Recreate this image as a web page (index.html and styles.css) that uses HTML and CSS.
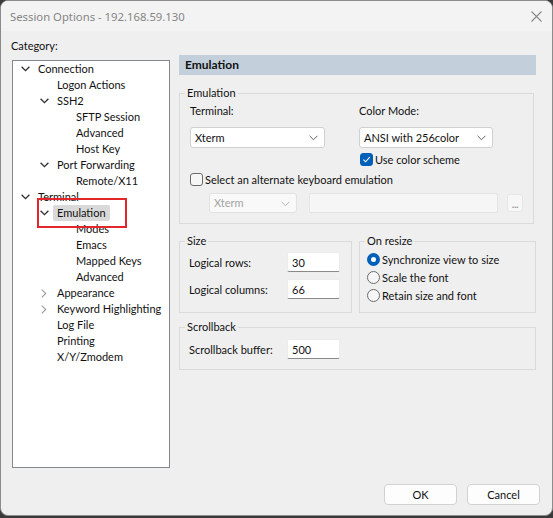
FILE: index.html
```html
<!DOCTYPE html>
<html lang="en">
  <head>
    <meta charset="UTF-8" />
    <title>Session Options</title>
    <link rel="stylesheet" href="styles.css">
  </head>

  <body>
    <div class="window">
      <div class="titleBar">
        <div class="titleText">Session Options - 192.168.59.130</div>
        <div class="titleClose">
          <svg width="11" height="11" viewBox="0 0 11 11"><path d="M0.5 0.5L10.5 10.5M10.5 0.5L0.5 10.5" stroke="#8a8a8a" stroke-width="1.1" fill="none"/></svg>
        </div>
      </div>

      <div class="mainArea">
        <div class="leftCol">
          <div class="catLabel">Category:</div>
          <ul class="tree">
            <li class="lv0"><span class="tog open"></span>Connection</li>
            <li class="lv1"><span class="tog"></span>Logon Actions</li>
            <li class="lv1"><span class="tog open"></span>SSH2</li>
            <li class="lv2"><span class="tog"></span>SFTP Session</li>
            <li class="lv2"><span class="tog"></span>Advanced</li>
            <li class="lv2"><span class="tog"></span>Host Key</li>
            <li class="lv1"><span class="tog open"></span>Port Forwarding</li>
            <li class="lv2"><span class="tog"></span>Remote/X11</li>
            <li class="lv0"><span class="tog open"></span>Terminal</li>
            <li class="lv1 current"><span class="tog open"></span><span class="selName">Emulation</span><div class="markBox"></div></li>
            <li class="lv2"><span class="tog"></span>Modes</li>
            <li class="lv2"><span class="tog"></span>Emacs</li>
            <li class="lv2"><span class="tog"></span>Mapped Keys</li>
            <li class="lv2"><span class="tog"></span>Advanced</li>
            <li class="lv1"><span class="tog shut"></span>Appearance</li>
            <li class="lv1"><span class="tog shut"></span>Keyword Highlighting</li>
            <li class="lv1"><span class="tog"></span>Log File</li>
            <li class="lv1"><span class="tog"></span>Printing</li>
            <li class="lv1"><span class="tog"></span>X/Y/Zmodem</li>
          </ul>
        </div>

        <div class="rightCol">
          <div class="panelHead">Emulation</div>

          <fieldset class="group emuGroup">
            <legend>Emulation</legend>
            <div class="emuTop">
              <div class="emuCol termCol">
                <div class="fieldLabel">Terminal:</div>
                <div class="combo termCombo">Xterm<span class="comboArrow"></span></div>
              </div>
              <div class="emuCol">
                <div class="fieldLabel">Color Mode:</div>
                <div class="combo colorCombo">ANSI with 256color<span class="comboArrow"></span></div>
                <div class="checkRow schemeRow"><span class="check on"></span>Use color scheme</div>
              </div>
            </div>
            <div class="checkRow altRow"><span class="check"></span>Select an alternate keyboard emulation</div>
            <div class="altLine">
              <div class="combo disabled altCombo">Xterm<span class="comboArrow"></span></div>
              <div class="altText"></div>
              <div class="dotsBtn">...</div>
            </div>
          </fieldset>

          <div class="groupRow">
            <fieldset class="group sizeGroup">
              <legend>Size</legend>
              <div class="formRow">
                <div class="rowLabel">Logical rows:</div>
                <div class="textBox">30</div>
              </div>
              <div class="formRow">
                <div class="rowLabel">Logical columns:</div>
                <div class="textBox">66</div>
              </div>
            </fieldset>
            <fieldset class="group resizeGroup">
              <legend>On resize</legend>
              <div class="radioRow"><span class="radio on"></span>Synchronize view to size</div>
              <div class="radioRow"><span class="radio"></span>Scale the font</div>
              <div class="radioRow"><span class="radio"></span>Retain size and font</div>
            </fieldset>
          </div>

          <fieldset class="group scrollGroup">
            <legend>Scrollback</legend>
            <div class="formRow">
              <div class="rowLabel">Scrollback buffer:</div>
              <div class="textBox">500</div>
            </div>
          </fieldset>
        </div>
      </div>

      <div class="buttonBar">
        <div class="btn">OK</div>
        <div class="btn">Cancel</div>
      </div>
    </div>
  </body>
</html>
```

FILE: styles.css
```css
html,
body {
  margin: 0;
  padding: 0;
}

body {
  background: #3a3a3a;
  font-family: 'Segoe UI', Lato, 'Noto Sans', Arial, sans-serif;
  font-size: 11px;
  color: #111111;
}

ul,
li {
  margin: 0;
  padding: 0;
  list-style: none;
}

.window {
  width: 553px;
  height: 516px;
  box-sizing: border-box;
  border: 1px solid #8c8c8c;
  border-radius: 8px;
  background: #efefef;
  overflow: hidden;
}

/* title bar */
.titleBar {
  display: flex;
  align-items: center;
  justify-content: space-between;
  height: 30px;
  padding: 0 9px 0 9px;
  background: #f3f3f3;
}

.titleText {
  color: #868686;
  font-family: 'Segoe UI', 'Noto Sans', Arial, sans-serif;
  font-size: 11.3px;
  line-height: 16px;
  padding-top: 1px;
}

.titleClose {
  display: flex;
  padding-right: 1px;
}

/* main */
.mainArea {
  display: flex;
  align-items: flex-start;
  padding: 7px 0 0 10px;
  height: 430px;
  gap: 9px;
}

.leftCol {
  width: 159px;
}

.catLabel {
  line-height: 16px;
}

.tree {
  margin-top: 6px;
  margin-left: 1px;
  height: 408px;
  box-sizing: border-box;
  border: 1px solid #828790;
  background: #ffffff;
}

.tree li {
  position: relative;
  display: flex;
  align-items: center;
  height: 16px;
  line-height: 16px;
  white-space: nowrap;
}

.lv0 {
  padding-left: 6px;
}

.lv1 {
  padding-left: 25px;
}

.lv2 {
  padding-left: 44px;
}

.tog {
  flex: none;
  display: inline-block;
  width: 12px;
  height: 16px;
  margin-right: 7px;
  background-repeat: no-repeat;
  background-position: center;
}

.tog.open {
  background-image: url("data:image/svg+xml,%3Csvg xmlns='http://www.w3.org/2000/svg' width='9' height='6' viewBox='0 0 9 6'%3E%3Cpath d='M0.6 0.8L4.5 4.7L8.4 0.8' stroke='%23303030' stroke-width='1.3' fill='none'/%3E%3C/svg%3E");
}

.tog.shut {
  background-image: url("data:image/svg+xml,%3Csvg xmlns='http://www.w3.org/2000/svg' width='6' height='9' viewBox='0 0 6 9'%3E%3Cpath d='M0.8 0.6L4.7 4.5L0.8 8.4' stroke='%23a0a0a0' stroke-width='1.2' fill='none'/%3E%3C/svg%3E");
}

.selName {
  margin-left: -4px;
  padding: 0 4px;
  background: #d9d9d9;
  border-radius: 2px;
}

.markBox {
  position: absolute;
  left: 24px;
  top: -7px;
  width: 86px;
  height: 26px;
  border: 2px solid #e3262c;
  z-index: 2;
}

/* right panel */
.rightCol {
  width: 357px;
  margin-top: 17px;
}

.panelHead {
  height: 20px;
  line-height: 20px;
  padding-left: 6px;
  background: #c3d0dc;
  font-size: 12px;
  font-weight: bold;
}

.group {
  margin: 0;
  padding: 0;
  border: 1px solid #dadada;
  min-width: 0;
}

.group legend {
  padding: 0 2px;
  line-height: 16px;
}

.emuGroup {
  margin-top: 10px;
  margin-right: 2px;
  padding: 2px 10px 10px 10px;
}

.emuGroup legend {
  margin-left: -5px;
}

.emuTop {
  display: flex;
}

.termCol {
  width: 169px;
}

.fieldLabel {
  line-height: 16px;
  margin-bottom: 8px;
}

.combo {
  position: relative;
  box-sizing: border-box;
  height: 21px;
  line-height: 19px;
  padding-left: 4px;
  background: #ffffff;
  border: 1px solid #d0d0d0;
  border-radius: 3px;
}

.termCombo {
  width: 135px;
}

.colorCombo {
  width: 134px;
}

.comboArrow {
  position: absolute;
  right: 6px;
  top: 7px;
  width: 9px;
  height: 6px;
  background: url("data:image/svg+xml,%3Csvg xmlns='http://www.w3.org/2000/svg' width='9' height='6' viewBox='0 0 9 6'%3E%3Cpath d='M0.6 0.8L4.5 4.7L8.4 0.8' stroke='%23606060' stroke-width='1' fill='none'/%3E%3C/svg%3E") no-repeat;
}

.combo.disabled {
  background: #f9f9f9;
  border-color: #e2e2e2;
  color: #a3a3a3;
}

.combo.disabled .comboArrow {
  opacity: 0.45;
}

.checkRow {
  display: flex;
  align-items: center;
  height: 16px;
  white-space: nowrap;
}

.schemeRow {
  margin-top: 3px;
  margin-left: 1px;
}

.altRow {
  margin-top: 4px;
}

.check {
  flex: none;
  display: inline-block;
  box-sizing: border-box;
  width: 13px;
  height: 13px;
  margin-right: 2px;
  border: 1px solid #6b6b6b;
  border-radius: 3px;
  background: #f6f6f6;
}

.check.on {
  border-color: #005fb8;
  background: #005fb8 url("data:image/svg+xml,%3Csvg xmlns='http://www.w3.org/2000/svg' width='11' height='11' viewBox='0 0 11 11'%3E%3Cpath d='M2.4 5.6L4.6 7.8L8.8 3.2' stroke='%23ffffff' stroke-width='1.1' fill='none'/%3E%3C/svg%3E") no-repeat center;
}

.altLine {
  display: flex;
  align-items: center;
  margin-top: 6px;
  padding-left: 19px;
}

.altCombo {
  width: 88px;
  height: 20px;
  line-height: 18px;
}

.altText {
  box-sizing: border-box;
  width: 189px;
  height: 20px;
  margin-left: 12px;
  background: #f6f6f6;
  border: 1px solid #e4e4e4;
  border-radius: 2px;
}

.dotsBtn {
  box-sizing: border-box;
  width: 16px;
  height: 18px;
  margin-left: 9px;
  border: 1px solid #e6e6e6;
  border-radius: 3px;
  background: #f7f7f7;
  color: #8a8a8a;
  font-size: 11px;
  line-height: 18px;
  text-align: center;
  letter-spacing: -0.5px;
}

.textBox {
  box-sizing: border-box;
  width: 53px;
  height: 20px;
  line-height: 19px;
  padding-left: 4px;
  background: #ffffff;
  border: 1px solid #ececec;
  border-bottom-color: #8a8a8a;
  border-radius: 2px;
}

.groupRow {
  display: flex;
  margin-top: 9px;
  gap: 7px;
}

.sizeGroup {
  width: 173px;
  box-sizing: border-box;
  padding: 3px 10px 12px 9px;
}

.sizeGroup legend,
.scrollGroup legend {
  margin-left: -4px;
}

.resizeGroup {
  width: 177px;
  box-sizing: border-box;
  padding: 1px 0 8px 7px;
}

.resizeGroup legend {
  margin-left: -2px;
}

.formRow {
  display: flex;
  align-items: center;
  height: 20px;
}

.formRow + .formRow {
  margin-top: 7px;
}

.rowLabel {
  flex: none;
  width: 98px;
  white-space: nowrap;
}

.radioRow {
  display: flex;
  align-items: center;
  height: 18px;
  white-space: nowrap;
}

.radio {
  flex: none;
  display: inline-block;
  box-sizing: border-box;
  width: 13px;
  height: 13px;
  margin-right: 2px;
  border: 1px solid #6b6b6b;
  border-radius: 50%;
  background: #f6f6f6;
}

.radio.on {
  border: 4px solid #005fb8;
  background: #ffffff;
}

.scrollGroup {
  margin-top: 6px;
  width: 357px;
  box-sizing: border-box;
  padding: 4px 0 10px 9px;
}

/* buttons */
.buttonBar {
  display: flex;
  justify-content: flex-end;
  gap: 10px;
  padding: 16px 12px 0 0;
}

.btn {
  box-sizing: border-box;
  width: 73px;
  height: 21px;
  line-height: 19px;
  text-align: center;
  background: #fdfdfd;
  border: 1px solid #d2d2d2;
  border-radius: 4px;
}
```
